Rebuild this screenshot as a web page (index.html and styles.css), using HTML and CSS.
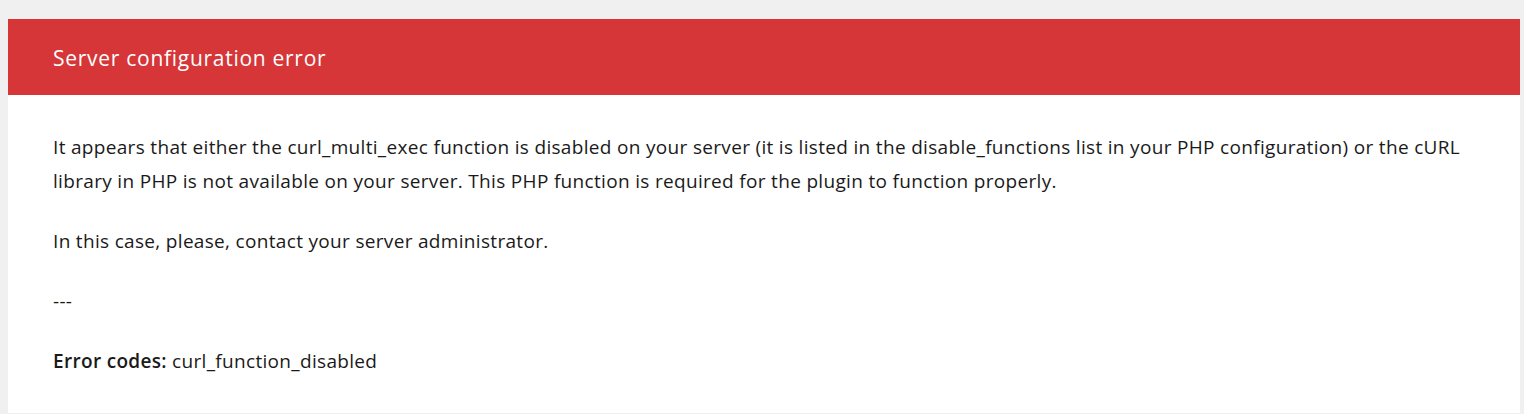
FILE: index.html
```html
<!DOCTYPE html>
<html lang="en">
<head>
<meta charset="utf-8">
<title>Server configuration error</title>
<link rel="stylesheet" href="styles.css">
</head>
<body>
<div class="card">
  <div class="card-header">Server configuration error</div>
  <div class="card-body">
    <p>It appears that either the curl_multi_exec function is disabled on your server (it is listed in the disable_functions list in your PHP configuration) or the cURL library in PHP is not available on your server. This PHP function is required for the plugin to function properly.</p>
    <p>In this case, please, contact your server administrator.</p>
    <p>---</p>
    <p><strong>Error codes:</strong> curl_function_disabled</p>
  </div>
</div>
</body>
</html>
```

FILE: styles.css
```css
html, body {
  margin: 0;
  padding: 0;
}
body {
  background: #f0f0f0;
  font-family: "Segoe UI", "Open Sans", "Noto Sans", sans-serif;
  color: #1a1a1a;
}
.card {
  margin: 19px 4px 0 8px;
  background: #ffffff;
}
.card-header {
  height: 76px;
  box-sizing: border-box;
  display: flex;
  align-items: center;
  padding: 2px 45px 0;
  background: #d63638;
  color: #ffffff;
  font-size: 21px;
  letter-spacing: 0.72px;
}
.card-body {
  padding: 35px 45px 35px;
  font-size: 19px;
  letter-spacing: 0.32px;
  line-height: 34px;
}
.card-body p {
  margin: 0 0 26px;
}
.card-body p:last-child {
  margin-bottom: 0;
}
.card-body strong {
  font-weight: 600;
}
```
